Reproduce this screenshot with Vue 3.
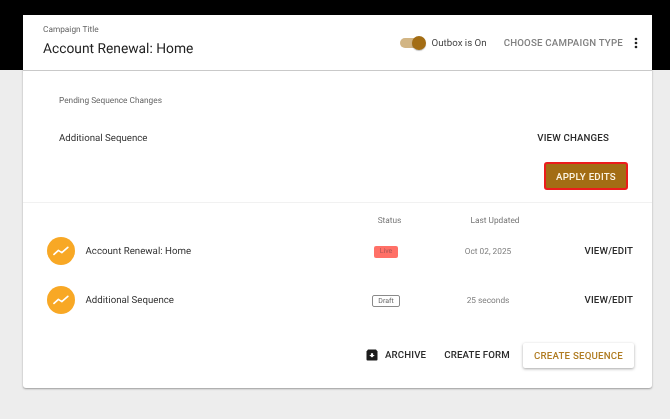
<script setup>
const rows = [
  { name: 'Account Renewal: Home', status: 'Live', updated: 'Oct 02, 2025' },
  { name: 'Additional Sequence', status: 'Draft', updated: '25 seconds' },
]
</script>

<template>
  <div class="page">
    <main class="card">
      <header class="head">
        <div class="title-block">
          <div class="eyebrow">Campaign Title</div>
          <h1 class="title">Account Renewal: Home</h1>
        </div>
        <div class="toggle" aria-hidden="true"><span class="track"></span><span class="knob"></span></div>
        <span class="outbox">Outbox is On</span>
        <span class="choose">CHOOSE CAMPAIGN TYPE</span>
        <svg class="more" width="4" height="12" viewBox="0 0 4 12"><circle cx="2" cy="2" r="1.35"/><circle cx="2" cy="6" r="1.35"/><circle cx="2" cy="10" r="1.35"/></svg>
      </header>

      <section class="pending">
        <div class="pending-label">Pending Sequence Changes</div>
        <div class="pending-row">
          <span class="pending-name">Additional Sequence</span>
          <span class="action">VIEW CHANGES</span>
        </div>
        <div class="apply-row"><button class="apply">APPLY EDITS</button></div>
      </section>

      <section class="table">
        <div class="thead">
          <span class="c-name"></span>
          <span class="c-status th-status">Status</span>
          <span class="c-updated th-updated">Last Updated</span>
          <span class="c-action"></span>
        </div>
        <div v-for="row in rows" :key="row.name" class="row">
          <div class="c-name name-cell">
            <span class="avatar">
              <svg width="16" height="10" viewBox="0 0 16 10"><polyline points="1,8.4 5.4,4.4 8.8,6.6 14.8,1.4" fill="none" stroke="#fff" stroke-width="1.7" stroke-linejoin="round" stroke-linecap="round"/></svg>
            </span>
            <span class="name">{{ row.name }}</span>
          </div>
          <div class="c-status">
            <span :class="['badge', row.status.toLowerCase()]">{{ row.status }}</span>
          </div>
          <div class="c-updated date">{{ row.updated }}</div>
          <div class="c-action action">VIEW/EDIT</div>
        </div>
        <div class="foot">
          <span class="action archive">
            <svg width="12" height="12" viewBox="0 0 12 12"><path d="M2 0.5h8L11.5 2.4V10.5a1 1 0 0 1-1 1h-9a1 1 0 0 1-1-1V2.4z" fill="#1c1c1c"/><path d="M6 4.2 8.8 6.8H7.1V8.6H4.9V6.8H3.2z" fill="#fff" transform="rotate(180 6 6.4)"/></svg>
            ARCHIVE
          </span>
          <span class="action form">CREATE FORM</span>
          <button class="create">CREATE SEQUENCE</button>
        </div>
      </section>
    </main>
  </div>
</template>

<style>
html, body { margin: 0; background: #ededed; }
</style>

<style scoped>
.page {
  width: 670px;
  height: 419px;
  box-sizing: border-box;
  padding: 15px 18px 0 23px;
  overflow: hidden;
  background: linear-gradient(#000 0 70px, #ededed 70px);
  font-family: Roboto, "Liberation Sans", sans-serif;
  text-rendering: geometricPrecision;
  color: #222;
  filter: blur(.3px);
}
.card {
  height: 373px;
  background: #fff;
  border-radius: 0 0 3px 3px;
  box-shadow: 0 1px 2px rgba(0, 0, 0, .35);
}
.head {
  height: 56px;
  box-sizing: border-box;
  border-bottom: 1px solid #c9c9c9;
  display: flex;
  align-items: center;
  padding: 0 14px 0 20px;
}
.title-block { flex: 1; align-self: flex-start; padding-top: 9.5px; }
.eyebrow { font-size: 8.3px; line-height: 11px; color: #666; }
.title { margin: 3px 0 0; font-size: 13.8px; line-height: 20px; font-weight: 400; color: #222; }
.toggle { position: relative; width: 26px; height: 14px; margin-right: 6px; }
.track { position: absolute; left: 0; right: 2px; top: 2px; height: 10px; border-radius: 5px; background: #d2b584; }
.knob { position: absolute; right: 0; top: 0; width: 14px; height: 14px; border-radius: 50%; background: #a36d14; box-shadow: 0 1px 1px rgba(0,0,0,.25); }
.outbox, .choose { padding-top: 2px; }
.outbox { font-size: 9.7px; color: #444; margin-right: 17px; }
.choose { font-size: 9.7px; font-weight: 500; color: #808080; letter-spacing: .2px; margin-right: 11px; }
.more { fill: #222; }
.pending { height: 132px; box-sizing: border-box; border-bottom: 1px solid #f1f1f1; padding: 24.5px 24px 0 36px; }
.pending-label { font-size: 8.3px; line-height: 11px; color: #666; }
.pending-row { display: flex; justify-content: space-between; align-items: center; margin-top: 24px; height: 16px; padding-right: 19px; }
.pending-name { font-size: 9.7px; color: #333; }
.action { font-size: 9.7px; font-weight: 500; color: #2a2a2a; letter-spacing: .15px; }
.apply-row { display: flex; justify-content: flex-end; margin-top: 15.5px; }
.apply {
  width: 84px; height: 28px; padding: 0;
  background: #a36d14;
  border: 2px solid #ec1c1c;
  border-radius: 3px;
  color: #fbf3e2;
  font: 500 9.7px Roboto, sans-serif;
  letter-spacing: .25px;
}
.table { padding: 0 19px 0 24px; }
.thead, .row { display: grid; grid-template-columns: 301px 76px 128px 1fr; align-items: center; }
.thead { height: 23px; box-sizing: border-box; padding-top: 13px; font-size: 8.3px; line-height: 11px; color: #777; }
.th-status { padding-left: 7px; }
.th-updated { padding-left: 14px; }
.row { height: 49px; }
.c-status, .c-updated { text-align: center; }
.c-action { text-align: right; }
.name, .date, .c-action { padding-top: 2px; }
.name-cell { display: flex; align-items: center; gap: 10.5px; }
.avatar { width: 28px; height: 28px; border-radius: 50%; background: #f8a825; display: flex; align-items: center; justify-content: center; }
.name { font-size: 9.7px; color: #333; }
.badge { display: inline-block; box-sizing: border-box; height: 12px; line-height: 11px; border-radius: 2px; font-size: 7px; text-align: center; vertical-align: middle; }
.badge.live { background: #ff7067; color: #a55; width: 24px; }
.badge.draft { border: 1px solid #8a8a8a; color: #666; width: 28px; line-height: 10px; }
.date { font-size: 8.3px; color: #808080; }
.foot { display: flex; justify-content: flex-end; align-items: center; margin-top: 18.7px; margin-right: -1px; }
.archive { display: inline-flex; align-items: center; gap: 7px; margin-right: 18px; }
.form { margin-right: 13px; }
.create {
  width: 111px; height: 25px; padding: 0;
  border: 0; border-radius: 2px;
  background: #fff;
  color: #b07c22;
  font: 500 9.7px Roboto, sans-serif;
  letter-spacing: .2px;
  box-shadow: 0 1px 3px rgba(0,0,0,.35);
}
</style>
